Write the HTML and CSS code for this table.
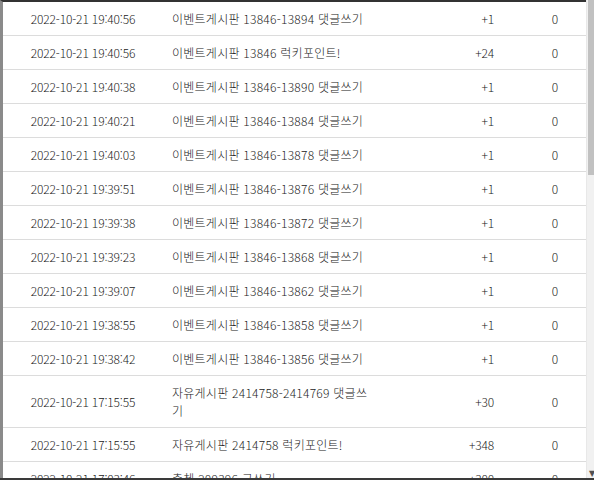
FILE: index.html
```html
<!DOCTYPE html>
<html lang="ko">
<head>
<meta charset="utf-8">
<link rel="stylesheet" href="styles.css">
</head>
<body>
<div class="window">
  <div class="panel">
    <div class="list">
      <div class="row"><div class="c-date">2022-10-21 19:40:56</div><div class="c-subj">이벤트게시판 13846-13894 댓글쓰기</div><div class="c-pt">+1</div><div class="c-bal">0</div></div>
      <div class="row"><div class="c-date">2022-10-21 19:40:56</div><div class="c-subj">이벤트게시판 13846 럭키포인트!</div><div class="c-pt">+24</div><div class="c-bal">0</div></div>
      <div class="row"><div class="c-date">2022-10-21 19:40:38</div><div class="c-subj">이벤트게시판 13846-13890 댓글쓰기</div><div class="c-pt">+1</div><div class="c-bal">0</div></div>
      <div class="row"><div class="c-date">2022-10-21 19:40:21</div><div class="c-subj">이벤트게시판 13846-13884 댓글쓰기</div><div class="c-pt">+1</div><div class="c-bal">0</div></div>
      <div class="row"><div class="c-date">2022-10-21 19:40:03</div><div class="c-subj">이벤트게시판 13846-13878 댓글쓰기</div><div class="c-pt">+1</div><div class="c-bal">0</div></div>
      <div class="row"><div class="c-date">2022-10-21 19:39:51</div><div class="c-subj">이벤트게시판 13846-13876 댓글쓰기</div><div class="c-pt">+1</div><div class="c-bal">0</div></div>
      <div class="row"><div class="c-date">2022-10-21 19:39:38</div><div class="c-subj">이벤트게시판 13846-13872 댓글쓰기</div><div class="c-pt">+1</div><div class="c-bal">0</div></div>
      <div class="row"><div class="c-date">2022-10-21 19:39:23</div><div class="c-subj">이벤트게시판 13846-13868 댓글쓰기</div><div class="c-pt">+1</div><div class="c-bal">0</div></div>
      <div class="row"><div class="c-date">2022-10-21 19:39:07</div><div class="c-subj">이벤트게시판 13846-13862 댓글쓰기</div><div class="c-pt">+1</div><div class="c-bal">0</div></div>
      <div class="row"><div class="c-date">2022-10-21 19:38:55</div><div class="c-subj">이벤트게시판 13846-13858 댓글쓰기</div><div class="c-pt">+1</div><div class="c-bal">0</div></div>
      <div class="row"><div class="c-date">2022-10-21 19:38:42</div><div class="c-subj">이벤트게시판 13846-13856 댓글쓰기</div><div class="c-pt">+1</div><div class="c-bal">0</div></div>
      <div class="row"><div class="c-date">2022-10-21 17:15:55</div><div class="c-subj">자유게시판 2414758-2414769 댓글쓰기</div><div class="c-pt">+30</div><div class="c-bal">0</div></div>
      <div class="row"><div class="c-date">2022-10-21 17:15:55</div><div class="c-subj">자유게시판 2414758 럭키포인트!</div><div class="c-pt">+348</div><div class="c-bal">0</div></div>
      <div class="row"><div class="c-date">2022-10-21 17:03:46</div><div class="c-subj">출첵 209396 글쓰기</div><div class="c-pt">+300</div><div class="c-bal">0</div></div>
    </div>
  </div>
  <div class="scrollbar">
    <div class="thumb"></div>
    <div class="arrow">▼</div>
  </div>
</div>
</body>
</html>
```

FILE: styles.css
```css
html, body {
  margin: 0;
  padding: 0;
  overflow: hidden;
  background: #ffffff;
}

.window {
  display: flex;
  width: 594px;
  height: 480px;
  box-sizing: border-box;
  border-bottom: 2px solid #3a3a3a;
}

.panel {
  flex: 1;
  min-width: 0;
  overflow: hidden;
  border-top: 2px solid #333333;
  border-left: 3px solid #8a8a8a;
  box-sizing: border-box;
}

.list {
  display: flex;
  flex-direction: column;
}

.row {
  display: grid;
  grid-template-columns: 160px 207px 124px 1fr;
  align-items: center;
  border-bottom: 1px solid #dcdcdc;
  padding: 7.5px 0;
  font-family: "Noto Sans CJK KR", "Noto Sans", sans-serif;
  font-size: 12px;
  font-weight: 300;
  line-height: 18px;
  color: #222222;
}

.c-date {
  text-align: center;
  letter-spacing: -0.15px;
}

.c-subj {
  padding-left: 9px;
  letter-spacing: 0.25px;
}

.c-pt {
  text-align: right;
  letter-spacing: -0.2px;
}

.c-bal {
  text-align: center;
  padding-left: 30px;
}

.scrollbar {
  width: 7px;
  position: relative;
  background: #f1f1f1;
  border-left: 1px solid #e8e8e8;
}

.thumb {
  height: 175px;
  background: #c1c1c1;
  margin-left: 1px;
}

.arrow {
  position: absolute;
  left: 2px;
  bottom: 0;
  font-size: 8px;
  line-height: 8px;
  color: #505050;
  font-family: "DejaVu Sans", sans-serif;
}
```
